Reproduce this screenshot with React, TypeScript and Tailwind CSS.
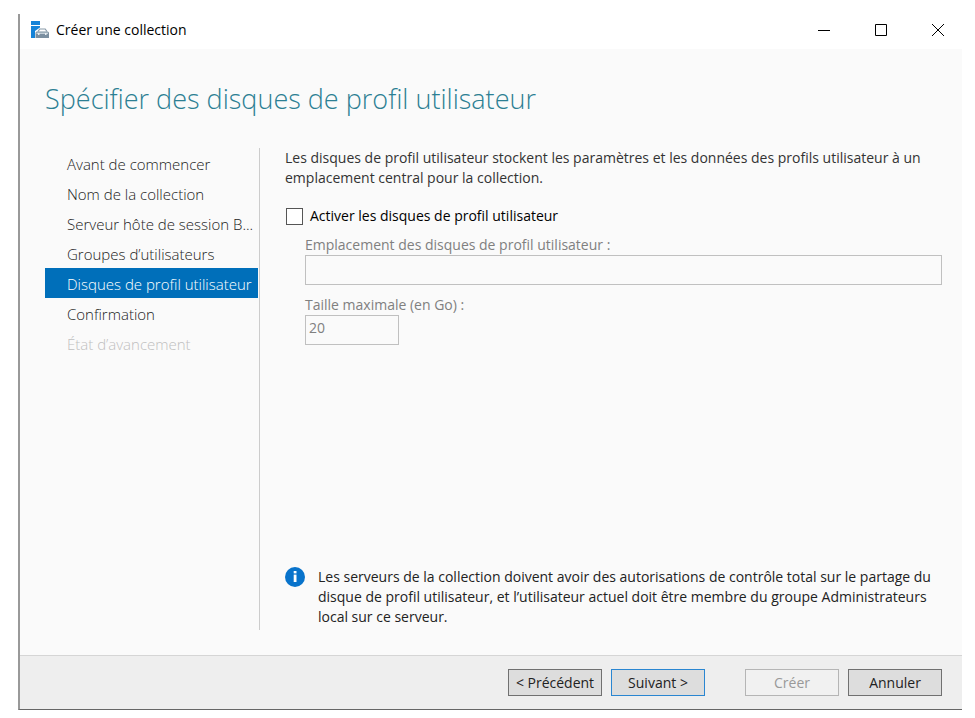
import { useState } from 'react';
import clsx from 'clsx';

const steps = [
  { label: 'Avant de commencer' },
  { label: 'Nom de la collection' },
  { label: 'Serveur hôte de session B...' },
  { label: 'Groupes d’utilisateurs' },
  { label: 'Disques de profil utilisateur', active: true },
  { label: 'Confirmation' },
  { label: 'État d’avancement', disabled: true },
];

const buttonBase = 'h-[27px] w-[94px] border text-sm leading-5 whitespace-nowrap';

function ServerIcon() {
  return (
    <svg viewBox="0 0 18 18" className="w-[18px] h-[18px]" aria-hidden="true">
      <path d="M0 0h9v4H0z" fill="#1583d8" />
      <path d="M0 5h9v1.500L4 10v7H0z" fill="#1583d8" />
      <path d="M7 10.500l1.800-2.500h5.400l1.800 2.500" fill="none" stroke="#8799a8" strokeWidth="1.200" />
      <path d="M4.500 12q0-1.500 1.500-1.500h10.500q1.500 0 1.500 1.500v5h-13.500z" fill="#7b8fa0" />
      <path d="M5.500 11.500h11.500v1.500H5.500z" fill="#c3ced7" />
      <path d="M7 12h1.500v2H7zM14 12h1.500v2H14z" fill="#e8eef2" />
    </svg>
  );
}

function InfoIcon() {
  return (
    <svg viewBox="0 0 20 20" className="w-5 h-5 shrink-0" aria-hidden="true">
      <circle cx="10" cy="10" r="10" fill="#0873cb" />
      <path d="M8.700 4h2.800v2.400H8.700z" fill="#fff" />
      <path d="M8.700 7.600h2.800v7.400H8.700z" fill="#fff" />
    </svg>
  );
}

function TitleBar() {
  return (
    <header className="flex items-center h-[35px] pb-1 pl-[11px] bg-white">
      <ServerIcon />
      <span className="flex-1 pl-[7px] text-sm text-black">Créer une collection</span>
      <div className="flex gap-[33px] pr-3">
        <button type="button" aria-label="Réduire" className="w-6 h-6 flex items-center justify-center">
          <svg viewBox="0 0 14 14" className="w-[14px] h-[14px]">
            <path d="M1 7.500h12" stroke="#000" />
          </svg>
        </button>
        <button type="button" aria-label="Agrandir" className="w-6 h-6 flex items-center justify-center">
          <svg viewBox="0 0 14 14" className="w-[14px] h-[14px]">
            <path d="M1.500 1.500h11v11h-11z" fill="none" stroke="#000" />
          </svg>
        </button>
        <button type="button" aria-label="Fermer" className="w-6 h-6 flex items-center justify-center">
          <svg viewBox="0 0 14 14" className="w-[14px] h-[14px]">
            <path d="M1 1l12 12M13 1L1 13" stroke="#000" />
          </svg>
        </button>
      </div>
    </header>
  );
}

export default function App() {
  const [enabled, setEnabled] = useState(false);

  return (
    <div className="min-h-screen flex bg-white pt-[14px] pr-[13px] pb-2 pl-[18px] font-['Open_Sans','Noto_Sans',sans-serif] text-sm leading-5">
      <div className="flex-1 flex flex-col border-l-2 border-b border-l-[#999999] border-b-[#666666] bg-[#fafafa]">
        <TitleBar />

        <h1 className="pt-8 pl-[25px] text-[27px] leading-9 font-light text-[#2c7f93]">
          Spécifier des disques de profil utilisateur
        </h1>

        <div className="flex-1 flex pt-[31px] pb-[25px] pl-[25px] pr-5">
          <nav className="w-[215px] shrink-0 pr-px border-r border-[#cccccc]">
            <ul>
              {steps.map((step) => (
                <li key={step.label}>
                  <a
                    href="#"
                    aria-current={step.active ? 'step' : undefined}
                    aria-disabled={step.disabled}
                    className={clsx(
                      'block h-[30px] pl-[22px] text-[15px] leading-8 whitespace-nowrap font-light',
                      step.active && 'bg-[#006fba] text-white',
                      step.disabled && 'text-[#bfbfbf]',
                      !step.active && !step.disabled && 'text-[#222222]',
                    )}
                  >
                    {step.label}
                  </a>
                </li>
              ))}
            </ul>
          </nav>

          <main className="flex-1 flex flex-col pl-[25px]">
            <p className="text-[#333333]">
              Les disques de profil utilisateur stockent les paramètres et les données des profils utilisateur à un
              emplacement central pour la collection.
            </p>

            <label className="flex items-center gap-[7px] mt-[18px] text-black">
              <input
                type="checkbox"
                checked={enabled}
                onChange={(e) => setEnabled(e.target.checked)}
                className="appearance-none w-[17px] h-[17px] ml-px border border-[#555555] bg-white checked:bg-[#006fba]"
              />
              Activer les disques de profil utilisateur
            </label>

            <div className="flex flex-col items-start pl-5 mt-[9px] text-[#808080]">
              <label htmlFor="location">Emplacement des disques de profil utilisateur :</label>
              <input
                id="location"
                type="text"
                disabled={!enabled}
                className="w-full h-[30px] px-[3px] border border-[#c0c0c0] bg-[#fafafa]"
              />
              <label htmlFor="size" className="mt-[10px]">Taille maximale (en Go) :</label>
              <input
                id="size"
                type="text"
                defaultValue="20"
                disabled={!enabled}
                className="w-[94px] h-[30px] px-[3px] pb-[6px] border border-[#c0c0c0] bg-[#fafafa]"
              />
            </div>

            <div className="flex gap-[13px] mt-auto pb-[3px] text-[#222222]">
              <InfoIcon />
              <p>
                Les serveurs de la collection doivent avoir des autorisations de contrôle total sur le partage du
                disque de profil utilisateur, et l’utilisateur actuel doit être membre du groupe Administrateurs
                local sur ce serveur.
              </p>
            </div>
          </main>
        </div>

        <footer className="flex justify-end gap-10 py-[13px] pr-5 border-t border-[#d5d5d5] bg-[#eeeeee]">
          <div className="flex gap-[9px]">
            <button type="button" className={clsx(buttonBase, 'border-[#707070] bg-[#dddddd] text-[#222222]')}>
              &lt; Précédent
            </button>
            <button type="button" className={clsx(buttonBase, 'border-[#2a86d1] bg-[#dddddd] text-[#222222]')}>
              Suivant &gt;
            </button>
          </div>
          <div className="flex gap-[9px]">
            <button type="button" disabled className={clsx(buttonBase, 'border-[#b5b5b5] bg-[#f1f1f1] text-[#999999]')}>
              Créer
            </button>
            <button type="button" className={clsx(buttonBase, 'border-[#707070] bg-[#dddddd] text-[#222222]')}>
              Annuler
            </button>
          </div>
        </footer>
      </div>
    </div>
  );
}
